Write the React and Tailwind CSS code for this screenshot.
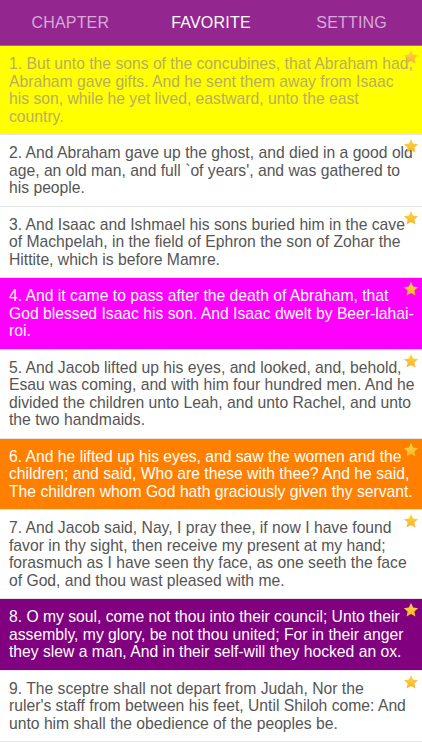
// Favorite verses list, Genesis 25 / 33 / 49 excerpts

const TABS = [
  { label: "CHAPTER", active: false },
  { label: "FAVORITE", active: true },
  { label: "SETTING", active: false },
];

const VERSES = [
  {
    bg: "bg-[#ffff00]",
    text: "text-[#b8ae62]",
    lines: [
      "1. But unto the sons of the concubines, that Abraham had,",
      "Abraham gave gifts. And he sent them away from Isaac",
      "his son, while he yet lived, eastward, unto the east",
      "country.",
    ],
  },
  {
    bg: "bg-white",
    text: "text-[#555555]",
    lines: [
      "2. And Abraham gave up the ghost, and died in a good old",
      "age, an old man, and full `of years', and was gathered to",
      "his people.",
    ],
  },
  {
    bg: "bg-white",
    text: "text-[#555555]",
    lines: [
      "3. And Isaac and Ishmael his sons buried him in the cave",
      "of Machpelah, in the field of Ephron the son of Zohar the",
      "Hittite, which is before Mamre.",
    ],
  },
  {
    bg: "bg-[#ff00ff]",
    text: "text-white",
    lines: [
      "4. And it came to pass after the death of Abraham, that",
      "God blessed Isaac his son. And Isaac dwelt by Beer-lahai-",
      "roi.",
    ],
  },
  {
    bg: "bg-white",
    text: "text-[#555555]",
    lines: [
      "5. And Jacob lifted up his eyes, and looked, and, behold,",
      "Esau was coming, and with him four hundred men. And he",
      "divided the children unto Leah, and unto Rachel, and unto",
      "the two handmaids.",
    ],
  },
  {
    bg: "bg-[#ff8000]",
    text: "text-white",
    lines: [
      "6. And he lifted up his eyes, and saw the women and the",
      "children; and said, Who are these with thee? And he said,",
      "The children whom God hath graciously given thy servant.",
    ],
  },
  {
    bg: "bg-white",
    text: "text-[#555555]",
    lines: [
      "7. And Jacob said, Nay, I pray thee, if now I have found",
      "favor in thy sight, then receive my present at my hand;",
      "forasmuch as I have seen thy face, as one seeth the face",
      "of God, and thou wast pleased with me.",
    ],
  },
  {
    bg: "bg-[#800080]",
    text: "text-white",
    lines: [
      "8. O my soul, come not thou into their council; Unto their",
      "assembly, my glory, be not thou united; For in their anger",
      "they slew a man, And in their self-will they hocked an ox.",
    ],
  },
  {
    bg: "bg-white",
    text: "text-[#555555]",
    lines: [
      "9. The sceptre shall not depart from Judah, Nor the",
      "ruler's staff from between his feet, Until Shiloh come: And",
      "unto him shall the obedience of the peoples be.",
    ],
  },
];

function Star({ id }) {
  return (
    <svg viewBox="0 0 24 24" className="w-[16px] h-[16px]" aria-hidden="true">
      <defs>
        <linearGradient id={id} x1="0" y1="0" x2="0" y2="1">
          <stop offset="0%" stopColor="#ffd84a" />
          <stop offset="100%" stopColor="#f5b325" />
        </linearGradient>
      </defs>
      <path
        d="M12 1.5l3.2 6.9 7.5.9-5.6 5.1 1.5 7.4L12 18.1l-6.6 3.7 1.5-7.4-5.6-5.1 7.5-.9z"
        fill={`url(#${id})`}
      />
    </svg>
  );
}

export default function App() {
  return (
    <div className="w-[422px] h-[750px] overflow-hidden bg-white font-['Liberation_Sans',Arial,sans-serif]">
      {/* Barra de abas */}
      <div className="h-[46px] bg-[#93278f] grid grid-cols-3 items-center border-b border-[#b05cad]">
        {TABS.map((t) => (
          <div
            key={t.label}
            className={`text-center text-[16px] tracking-[0.2px] ${
              t.active ? "text-white" : "text-[#d8a9d6]"
            }`}
          >
            {t.label}
          </div>
        ))}
      </div>

      {/* Lista de versículos favoritos */}
      {VERSES.map((v, i) => (
        <div
          key={i}
          className={`relative ${v.bg} ${v.text} pl-[9px] pr-[6px] py-[9px] border-b border-[#e6e6e6] text-[15.7px] leading-[17.5px]`}
        >
          {v.lines.map((l, j) => (
            <span key={j} className="block whitespace-nowrap">
              {l}
            </span>
          ))}
          <span className="absolute top-[3px] right-[3px]">
            <Star id={`star-${i}`} />
          </span>
        </div>
      ))}
    </div>
  );
}
